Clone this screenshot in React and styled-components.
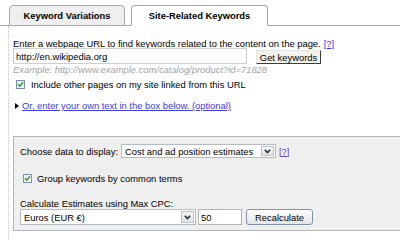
import React from 'react';
import styled, { createGlobalStyle } from 'styled-components';

const Global = createGlobalStyle`
  html, body { margin: 0; padding: 0; background: #fff; }
  body { font-family: "Liberation Sans", Arial, sans-serif; font-size: 9.4px; color: #000; }
  * { box-sizing: border-box; }
`;

const Page = styled.div`
  width: 400px;
  height: 240px;
  overflow: hidden;
  padding-top: 5px;
`;

const TabBar = styled.div`
  display: flex;
  align-items: flex-start;
  gap: 6px;
  padding-left: 9px;
  height: 21px;
  border-bottom: 1px solid #a9a9a9;
`;

const Tab = styled.div`
  width: ${(p) => p.$w}px;
  height: 21px;
  display: flex;
  align-items: center;
  justify-content: center;
  font-weight: bold;
  white-space: nowrap;
  border: 1px solid #a9a9a9;
  border-radius: 4px 4px 0 0;
  background: ${(p) => (p.$active ? '#fff' : '#efefef')};
  border-bottom-color: ${(p) => (p.$active ? '#fff' : '#a9a9a9')};
`;

const Content = styled.div`
  margin-left: 8px;
  border-left: 1px dotted #c8c8c8;
  padding: 13px 0 9px 4px;
`;

const Intro = styled.div`
  line-height: 9px;
  white-space: nowrap;
`;

const Help = styled.span`
  color: ${(p) => (p.$visited ? '#6a3fa6' : '#3535e0')};
  text-decoration: underline;
  margin-left: 3px;
`;

const UrlRow = styled.div`
  display: flex;
  align-items: flex-start;
  height: 16px;
`;

const TextInput = styled.div`
  width: ${(p) => p.$w}px;
  height: 16px;
  border: 1px solid ${(p) => p.$border || '#cfcfcf'};
  background: #fff;
  padding-left: 2px;
  display: flex;
  align-items: center;
  white-space: nowrap;
  margin-left: ${(p) => p.$ml || 0}px;
`;

const GetButton = styled.div`
  margin-left: 9px;
  margin-top: 2px;
  height: 14px;
  width: 65px;
  display: flex;
  align-items: center;
  justify-content: center;
  white-space: nowrap;
  background: #f3f2ec;
  border: 1px solid;
  border-color: #e4e4e4 #3c3c3c #3c3c3c #e4e4e4;
`;

const Example = styled.div`
  line-height: 11px;
  color: #a3a3a3;
  font-style: italic;
  white-space: nowrap;
`;

const CheckRow = styled.div`
  display: flex;
  align-items: center;
  gap: ${(p) => p.$gap}px;
  height: 12px;
  margin-top: ${(p) => p.$mt}px;
  padding-left: 3px;
  white-space: nowrap;
`;

const Box = styled.span`
  width: 9px;
  height: 9px;
  border: 1px solid #7d8fae;
  background: linear-gradient(135deg, #e6e6e6, #fff);
  display: flex;
  align-items: center;
  justify-content: center;
`;

const Check = () => (
  <Box>
    <svg width="7" height="7" viewBox="0 0 7 7">
      <polyline points="1,3.3 2.8,5.2 6,1.3" fill="none" stroke="#1f9e21" strokeWidth="1.4" />
    </svg>
  </Box>
);

const LinkRow = styled.div`
  display: flex;
  align-items: center;
  margin-top: 10px;
  line-height: 12px;
  white-space: nowrap;
`;

const Arrow = styled.span`
  width: 0;
  height: 0;
  border-left: 4px solid #000;
  border-top: 3px solid transparent;
  border-bottom: 3px solid transparent;
  margin-left: 2px;
  margin-right: 3px;
`;

const Link = styled.span`
  color: #4040e0;
  text-decoration: underline;
`;

const Panel = styled.div`
  margin-top: 24px;
  border: 1px solid #b4b4b4;
  border-right: none;
  background: #efefef;
  padding: 7px 0 5px 6px;
`;

const PanelRow = styled.div`
  display: flex;
  align-items: center;
  height: ${(p) => p.$h}px;
  margin-top: ${(p) => p.$mt || 0}px;
  white-space: nowrap;
`;

const Label = styled.div`
  line-height: 11px;
  margin-top: 14px;
  white-space: nowrap;
`;

const SelectBox = styled.div`
  width: ${(p) => p.$w}px;
  height: ${(p) => p.$h}px;
  margin-left: ${(p) => p.$ml || 0}px;
  border: 1px solid #b7bcc4;
  background: #fff;
  display: flex;
  align-items: stretch;
`;

const SelectText = styled.span`
  flex: 1;
  padding-left: 3px;
  display: flex;
  align-items: center;
`;

const DropBtn = styled.span`
  width: 13px;
  margin: 1px;
  border: 1px solid #b9c2d0;
  background: linear-gradient(#f4f5f8, #dfe3ea);
  display: flex;
  align-items: center;
  justify-content: center;
`;

const Select = ({ w, h, ml, children }) => (
  <SelectBox $w={w} $h={h} $ml={ml}>
    <SelectText>{children}</SelectText>
    <DropBtn>
      <svg width="7" height="5" viewBox="0 0 7 5">
        <polyline points="0.8,0.8 3.5,3.6 6.2,0.8" fill="none" stroke="#2b2b2b" strokeWidth="1.6" />
      </svg>
    </DropBtn>
  </SelectBox>
);

const RecalcButton = styled.div`
  margin-left: 4px;
  width: 67px;
  height: 16px;
  border: 1px solid #8090ad;
  border-radius: 3px;
  background: linear-gradient(#ffffff, #e4e4e4);
  display: flex;
  align-items: center;
  justify-content: center;
`;

export default function App() {
  return (
    <>
      <Global />
      <Page>
        <TabBar>
          <Tab $w={116}>Keyword Variations</Tab>
          <Tab $w={137} $active>Site-Related Keywords</Tab>
        </TabBar>
        <Content>
          <Intro>
            Enter a webpage URL to find keywords related to the content on the page.
            <Help>[?]</Help>
          </Intro>
          <UrlRow>
            <TextInput $w={234}>http://en.wikipedia.org</TextInput>
            <GetButton>Get keywords</GetButton>
          </UrlRow>
          <Example>Example: http://www.example.com/catalog/product?id=71828</Example>
          <CheckRow $mt={3} $gap={6}>
            <Check />
            Include other pages on my site linked from this URL
          </CheckRow>
          <LinkRow>
            <Arrow />
            <Link>Or, enter your own text in the box below. (optional)</Link>
          </LinkRow>
          <Panel>
            <PanelRow $h={14}>
              Choose data to display:
              <Select w={155} h={14} ml={3}>Cost and ad position estimates</Select>
              <Help $visited>[?]</Help>
            </PanelRow>
            <CheckRow $mt={14} $gap={5}>
              <Check />
              Group keywords by common terms
            </CheckRow>
            <Label>Calculate Estimates using Max CPC:</Label>
            <PanelRow $h={16}>
              <Select w={176} h={16}>Euros (EUR €)</Select>
              <TextInput $w={44} $ml={2} $border="#b5b5b5">50</TextInput>
              <RecalcButton>Recalculate</RecalcButton>
            </PanelRow>
          </Panel>
        </Content>
      </Page>
    </>
  );
}
